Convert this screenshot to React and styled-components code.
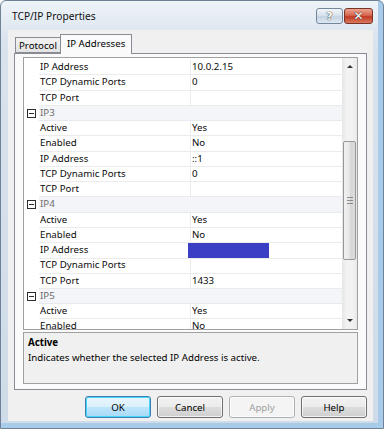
import React from 'react';
import styled, { createGlobalStyle } from 'styled-components';

const GlobalStyle = createGlobalStyle`
  html, body {
    margin: 0;
    padding: 0;
    background: #fff;
  }
  body {
    font-family: "Noto Sans", "Open Sans", sans-serif;
    font-size: 9.7px;
    color: #000;
  }
`

const Window = styled.div`
  width: 384px;
  height: 429px;
  box-sizing: border-box;
  display: flex;
  flex-direction: column;
  padding: 0 10px 7px 7px;
  border: 1px solid #6f8196;
  border-radius: 6px 6px 0 0;
  background:
    linear-gradient(to left, #a8cbea 0 5px, transparent 5px),
    linear-gradient(to top, #a8cbea 0 5px, transparent 5px),
    linear-gradient(#eef3f8, #d9e3ee 40px, #cfdbe8);
`

const TitleBar = styled.div`
  height: 29px;
  display: flex;
  align-items: flex-start;
  justify-content: space-between;
`

const Title = styled.span`
  margin: 8px 0 0 4px;
  font-size: 10.2px;
  color: #111;
`

const Controls = styled.div`
  display: flex;
  gap: 1px;
  margin-top: 7px;
`

const CapButton = styled.div`
  width: ${p => p.$w}px;
  height: 16px;
  box-sizing: border-box;
  border: 1px solid ${p => (p.$close ? '#7a3327' : '#74869c')};
  border-radius: 3px;
  display: flex;
  align-items: center;
  justify-content: center;
  font-family: "DejaVu Sans", sans-serif;
  font-weight: bold;
  font-size: ${p => (p.$close ? 12 : 11)}px;
  color: #fff;
  text-shadow: 0 0 1px #333, 0 0 1px #333;
  background: ${p =>
    p.$close
      ? 'linear-gradient(#eba592, #d8664f 45%, #c23a22 55%, #d87a62)'
      : 'linear-gradient(#f3f6fa, #d9e2ed 45%, #c6d3e2 55%, #dfe8f2)'};
`

const Client = styled.div`
  flex: 1;
  background: #f0f0f0;
  display: flex;
  flex-direction: column;
  padding: 4px 6px 0 6px;
`

const TabStrip = styled.div`
  height: 19px;
  display: flex;
  align-items: flex-end;
  padding-left: 1px;
`

const Tab = styled.div`
  position: relative;
  z-index: ${p => (p.$active ? 1 : 0)};
  box-sizing: border-box;
  height: ${p => (p.$active ? 20 : 16)}px;
  margin-bottom: ${p => (p.$active ? -1 : 0)}px;
  margin-left: ${p => (p.$active ? -1 : 0)}px;
  padding: ${p => (p.$active ? '2px 6px 0 6px' : '1px 3px 0')};
  border: 1px solid #898c95;
  border-bottom: ${p => (p.$active ? 'none' : '1px solid #898c95')};
  background: ${p => (p.$active ? '#fafafa' : 'linear-gradient(#f2f2f2, #e3e3e3)')};
  line-height: 13px;
  white-space: nowrap;
`

const Panel = styled.div`
  height: 337px;
  box-sizing: border-box;
  border: 1px solid #898c95;
  background: #fafafa;
  padding: 3px 8px 0 8px;
  display: flex;
  flex-direction: column;
  gap: 2px;
`

const Grid = styled.div`
  height: 273px;
  box-sizing: border-box;
  border: 1px solid #a0a0a0;
  background: #fff;
  display: flex;
  overflow: hidden;
`

const Rows = styled.div`
  flex: 1;
  padding-top: 2px;
  overflow: hidden;
`

const Row = styled.div`
  display: grid;
  grid-template-columns: 15px 151px 1fr;
  height: 15.25px;
  line-height: 14px;
  white-space: nowrap;
`

const Margin = styled.div`
  background: #fff;
  display: flex;
  align-items: center;
  justify-content: center;
`

const Label = styled.div`
  padding-left: 1px;
  border-bottom: 1px solid #ebebeb;
  color: #0a0a0a;
`

const Value = styled.div`
  padding-left: 1px;
  border-left: 1px solid #ebebeb;
  border-bottom: 1px solid #ebebeb;
  color: #0a0a0a;
  display: flex;
  align-items: center;
`

const Category = styled.div`
  grid-column: 2 / 4;
  background: #f3f5f9;
  border-bottom: 1px solid #e6e9ee;
  padding-left: 1px;
  color: #6d6d6d;
`

const Toggle = styled.div`
  width: 9px;
  height: 9px;
  box-sizing: border-box;
  border: 1px solid #2d2d2d;
  display: flex;
  align-items: center;
  justify-content: center;
  &::after {
    content: '';
    width: 5px;
    height: 1px;
    background: #2d2d2d;
  }
`

const Redacted = styled.span`
  display: block;
  width: 81px;
  height: 15px;
  margin-left: -4px;
  background: #3a3fc4;
`

const ScrollBar = styled.div`
  width: 15px;
  display: flex;
  flex-direction: column;
  background: linear-gradient(to right, #e6e6e6, #f2f2f2 30%, #f2f2f2 70%, #e8e8e8);
`

const Arrow = styled.div`
  height: 17px;
  display: flex;
  align-items: center;
  justify-content: center;
  &::after {
    content: '';
    border-left: 3px solid transparent;
    border-right: 3px solid transparent;
    ${p => (p.$down ? 'border-top: 3px solid #333;' : 'border-bottom: 3px solid #333;')}
  }
`

const Track = styled.div`
  flex: 1;
  padding: 0 1px;
`

const Thumb = styled.div`
  box-sizing: border-box;
  height: 119px;
  border: 1px solid #979797;
  border-radius: 2px;
  background: linear-gradient(to right, #f2f2f2, #e6e6e6 50%, #d6d6d6 51%, #dcdcdc);
  display: flex;
  align-items: center;
  justify-content: center;
`

const Grip = styled.div`
  width: 6px;
  height: 7px;
  background: repeating-linear-gradient(#555 0 1px, transparent 1px 3px);
  opacity: 0.6;
`

const HelpBox = styled.div`
  height: 52px;
  box-sizing: border-box;
  border: 1px solid #a0a0a0;
  background: #f0f0f0;
  padding: 2px 4px;
  line-height: 15px;
`

const HelpTitle = styled.div`
  font-weight: bold;
`

const Buttons = styled.div`
  display: flex;
  justify-content: flex-end;
  gap: 6px;
  margin-top: 6px;
`

const Button = styled.button`
  width: 66px;
  height: 22px;
  box-sizing: border-box;
  border: 1px solid ${p => (p.$default ? '#3c7fb1' : '#707070')};
  border-radius: 3px;
  padding: 0;
  font-family: inherit;
  font-size: 9.7px;
  color: ${p => (p.disabled ? '#a0a0a0' : '#000')};
  background: ${p =>
    p.$default
      ? 'linear-gradient(#eaf6fd, #d9f0fc 50%, #bee6fd 51%, #a7d9f5)'
      : p.disabled
      ? '#f4f4f4'
      : 'linear-gradient(#f2f2f2, #ebebeb 50%, #dddddd 51%, #cfcfcf)'};
  ${p => (p.disabled ? 'border-color: #adb2b5;' : '')}
  box-shadow: inset 0 0 0 1px ${p => (p.$default ? '#48d5fb' : 'rgba(255,255,255,0.7)')};
`

const rows = [
  { label: 'IP Address', value: '10.0.2.15' },
  { label: 'TCP Dynamic Ports', value: '0' },
  { label: 'TCP Port', value: '' },
  { category: 'IP3' },
  { label: 'Active', value: 'Yes' },
  { label: 'Enabled', value: 'No' },
  { label: 'IP Address', value: '::1' },
  { label: 'TCP Dynamic Ports', value: '0' },
  { label: 'TCP Port', value: '' },
  { category: 'IP4' },
  { label: 'Active', value: 'Yes' },
  { label: 'Enabled', value: 'No' },
  { label: 'IP Address', redacted: true },
  { label: 'TCP Dynamic Ports', value: '' },
  { label: 'TCP Port', value: '1433' },
  { category: 'IP5' },
  { label: 'Active', value: 'Yes' },
  { label: 'Enabled', value: 'No' },
];

export default function App() {
  return (
    <>
      <GlobalStyle />
      <Window>
        <TitleBar>
          <Title>TCP/IP Properties</Title>
          <Controls>
            <CapButton $w={27}>?</CapButton>
            <CapButton $w={29} $close>✕</CapButton>
          </Controls>
        </TitleBar>
        <Client>
          <TabStrip>
            <Tab>Protocol</Tab>
            <Tab $active>IP Addresses</Tab>
          </TabStrip>
          <Panel>
            <Grid>
              <Rows>
                {rows.map((r, i) =>
                  r.category ? (
                    <Row key={i}>
                      <Margin><Toggle /></Margin>
                      <Category>{r.category}</Category>
                    </Row>
                  ) : (
                    <Row key={i}>
                      <Margin />
                      <Label>{r.label}</Label>
                      <Value>{r.redacted ? <Redacted /> : r.value}</Value>
                    </Row>
                  )
                )}
              </Rows>
              <ScrollBar>
                <Arrow />
                <Track>
                  <Thumb style={{ marginTop: 66 }}><Grip /></Thumb>
                </Track>
                <Arrow $down />
              </ScrollBar>
            </Grid>
            <HelpBox>
              <HelpTitle>Active</HelpTitle>
              <div>Indicates whether the selected IP Address is active.</div>
            </HelpBox>
          </Panel>
          <Buttons>
            <Button $default>OK</Button>
            <Button>Cancel</Button>
            <Button disabled>Apply</Button>
            <Button>Help</Button>
          </Buttons>
        </Client>
      </Window>
    </>
  );
}
